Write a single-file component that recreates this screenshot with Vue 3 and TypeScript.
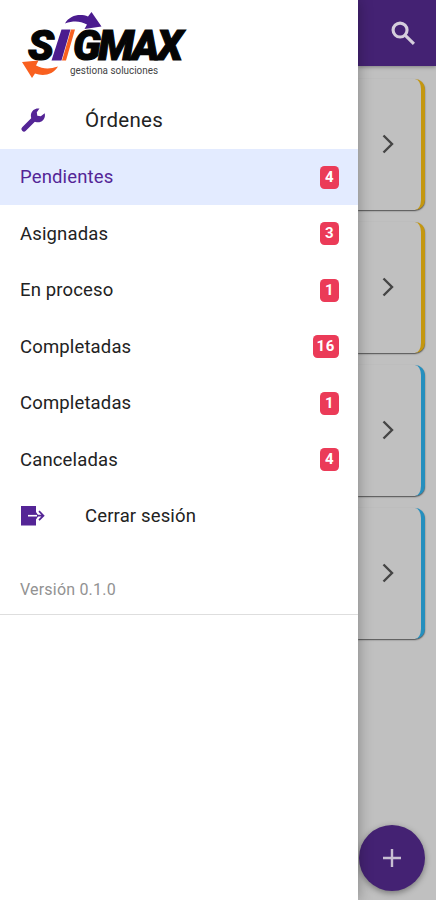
<script setup lang="ts">
interface Status {
  label: string
  count: number
  active?: boolean
}

const statuses: Status[] = [
  { label: 'Pendientes', count: 4, active: true },
  { label: 'Asignadas', count: 3 },
  { label: 'En proceso', count: 1 },
  { label: 'Completadas', count: 16 },
  { label: 'Completadas', count: 1 },
  { label: 'Canceladas', count: 4 },
]

const cards: string[] = ['amber', 'amber', 'blue', 'blue']
</script>

<template>
  <div class="screen">
    <aside class="drawer">
      <svg class="logo" viewBox="0 0 200 92" role="img" aria-label="Sigmax">
        <g class="brand">
          <text x="28" y="60" textLength="26" lengthAdjust="spacingAndGlyphs">S</text>
          <text x="73" y="60" textLength="110" lengthAdjust="spacing">GMAX</text>
        </g>
        <path d="M61.500 29.500H70.500L61.500 60.500H51.500Z" fill="#4b1c8f" />
        <path d="M71 29.500H75L66 60.500H62Z" fill="#f9601f" />
        <path d="M65 23.500C70 15 80 13.500 88 16.500L91.500 12L101.500 26.500L84.500 29L87 24.500C80 21 74 20.500 65 23.500Z" fill="#4b1c8f" />
        <path d="M58 66.500C53 75 43 76.500 35 73.500L32 78L22 62L38.500 60.500L36 65.500C43 69 49 69.500 58 66.500Z" fill="#f9601f" />
        <text class="tagline" x="70" y="73.500" textLength="88" lengthAdjust="spacingAndGlyphs">gestiona soluciones</text>
      </svg>

      <div class="item heading">
        <svg class="icon" viewBox="0 0 26 26">
          <path class="handle" d="M15 12L5 22" />
          <path d="M20.500 1.600L17.800 5.300L18.300 8.800L21.800 9.300L25.700 6.200C27 11.500 23 16 18 15.300C13.500 14.700 11.300 11 12 7.300C12.800 3.200 16.500 .8 20.500 1.600Z" />
        </svg>
        <span class="title">Órdenes</span>
      </div>

      <nav>
        <div v-for="(s, i) in statuses" :key="i" class="item" :class="{ active: s.active }">
          <span class="label">{{ s.label }}</span>
          <span class="badge">{{ s.count }}</span>
        </div>
      </nav>

      <div class="item exit">
        <svg class="icon" viewBox="0 0 26 26">
          <path d="M2 3H17V9L19.500 12.700L17 16.500V22.500H2Z" />
          <path class="slit" d="M9 12.700H18" />
          <path class="arrow" d="M18 12.700H24.500M20 8.200L24.500 12.700L20 17.200" />
        </svg>
        <span class="title">Cerrar sesión</span>
      </div>

      <div class="version">Versión 0.1.0</div>
    </aside>

    <main class="page">
      <header class="toolbar">
        <svg class="search" viewBox="0 0 24 24">
          <circle cx="8.700" cy="8.700" r="6.700" />
          <path d="M13.700 13.700L22 22" />
        </svg>
      </header>
      <section class="cards">
        <article v-for="(tone, i) in cards" :key="i" class="card" :class="tone">
          <svg class="chevron" viewBox="0 0 12 20"><path d="M1.500 1.500L10 10L1.500 18.500" /></svg>
        </article>
      </section>
      <button class="fab" type="button" aria-label="+">
        <svg viewBox="0 0 18 18"><path d="M9 0V18M0 9H18" /></svg>
      </button>
    </main>
  </div>
</template>

<style>
body {
  background: #c0c0c0;
}
</style>

<style scoped>
.screen {
  display: flex;
  width: 436px;
  height: 900px;
  overflow: hidden;
  font-family: Roboto, sans-serif;
}
.drawer {
  position: relative;
  z-index: 1;
  flex: 0 0 358px;
  background: #fff;
  box-shadow: 0 0 14px rgba(0, 0, 0, 0.32);
}
.logo {
  display: block;
  width: 200px;
  height: 92px;
}
.brand {
  font: italic 900 42px Roboto, sans-serif;
  fill: #050505;
  stroke: #050505;
  stroke-width: 1.200;
}
.tagline {
  font: 400 11.5px Roboto, sans-serif;
  fill: #444;
}
.item {
  box-sizing: border-box;
  display: flex;
  align-items: center;
  height: 56.500px;
  padding: 1px 19px 0 20px;
  color: #222;
  font-size: 18.500px;
  letter-spacing: 0.15px;
}
.heading {
  padding-top: 0;
  font-size: 20.500px;
  letter-spacing: 0.3px;
}
.active {
  background: #e3ebff;
  color: #542596;
}
.label {
  flex: 1;
}
.badge {
  box-sizing: border-box;
  min-width: 19px;
  height: 23px;
  padding: 0 4px;
  border-radius: 4.500px;
  background: #eb3b58;
  color: #fff;
  font-size: 15px;
  font-weight: 700;
  letter-spacing: 0.6px;
  line-height: 23px;
  text-align: center;
}
.icon {
  width: 26px;
  height: 26px;
  margin: 0 40px 0 -1px;
  fill: #542596;
}
.handle {
  stroke: #542596;
  stroke-width: 5.200;
  stroke-linecap: round;
}
.slit {
  stroke: #fff;
  stroke-width: 1.600;
}
.arrow {
  fill: none;
  stroke: #542596;
  stroke-width: 1.700;
}
.version {
  box-sizing: border-box;
  height: 71px;
  padding: 36px 20px 0;
  border-bottom: 1.500px solid #dedede;
  color: #929292;
  font-size: 16px;
  line-height: 20px;
  letter-spacing: 0.2px;
}
.page {
  display: flex;
  flex: 1;
  flex-direction: column;
  background: #c0c0c0;
}
.toolbar {
  box-sizing: border-box;
  display: flex;
  align-items: center;
  justify-content: flex-end;
  height: 66px;
  padding-right: 20px;
  background: #442273;
  box-shadow: 0 1px 4px rgba(0, 0, 0, 0.35);
}
.search {
  width: 25px;
  height: 25px;
  fill: none;
  stroke: #d5cedc;
  stroke-width: 3;
}
.cards {
  display: flex;
  flex-direction: column;
  gap: 12px;
  padding: 79px 11px 0 0;
  margin-top: -66px;
}
.card {
  box-sizing: border-box;
  display: flex;
  align-items: center;
  justify-content: flex-end;
  height: 131px;
  padding: 0 27.500px 2px 0;
  border-right: 4px solid;
  border-radius: 0 10px 10px 0;
  background: #c0c0c0;
  box-shadow: 0 1px 1.500px rgba(0, 0, 0, 0.6);
}
.amber {
  border-color: #c49710;
}
.blue {
  border-color: #258fbe;
}
.chevron {
  width: 12px;
  height: 20px;
  fill: none;
  stroke: #454545;
  stroke-width: 2.400;
}
.fab {
  display: flex;
  align-items: center;
  justify-content: center;
  width: 66px;
  height: 66px;
  margin: auto 0 9px 1px;
  padding: 0;
  border: 0;
  border-radius: 50%;
  background: #442273;
  box-shadow: 0 2px 6px rgba(0, 0, 0, 0.4);
}
.fab svg {
  width: 18px;
  height: 18px;
  stroke: #c8bfd2;
  stroke-width: 2.400;
}
</style>
